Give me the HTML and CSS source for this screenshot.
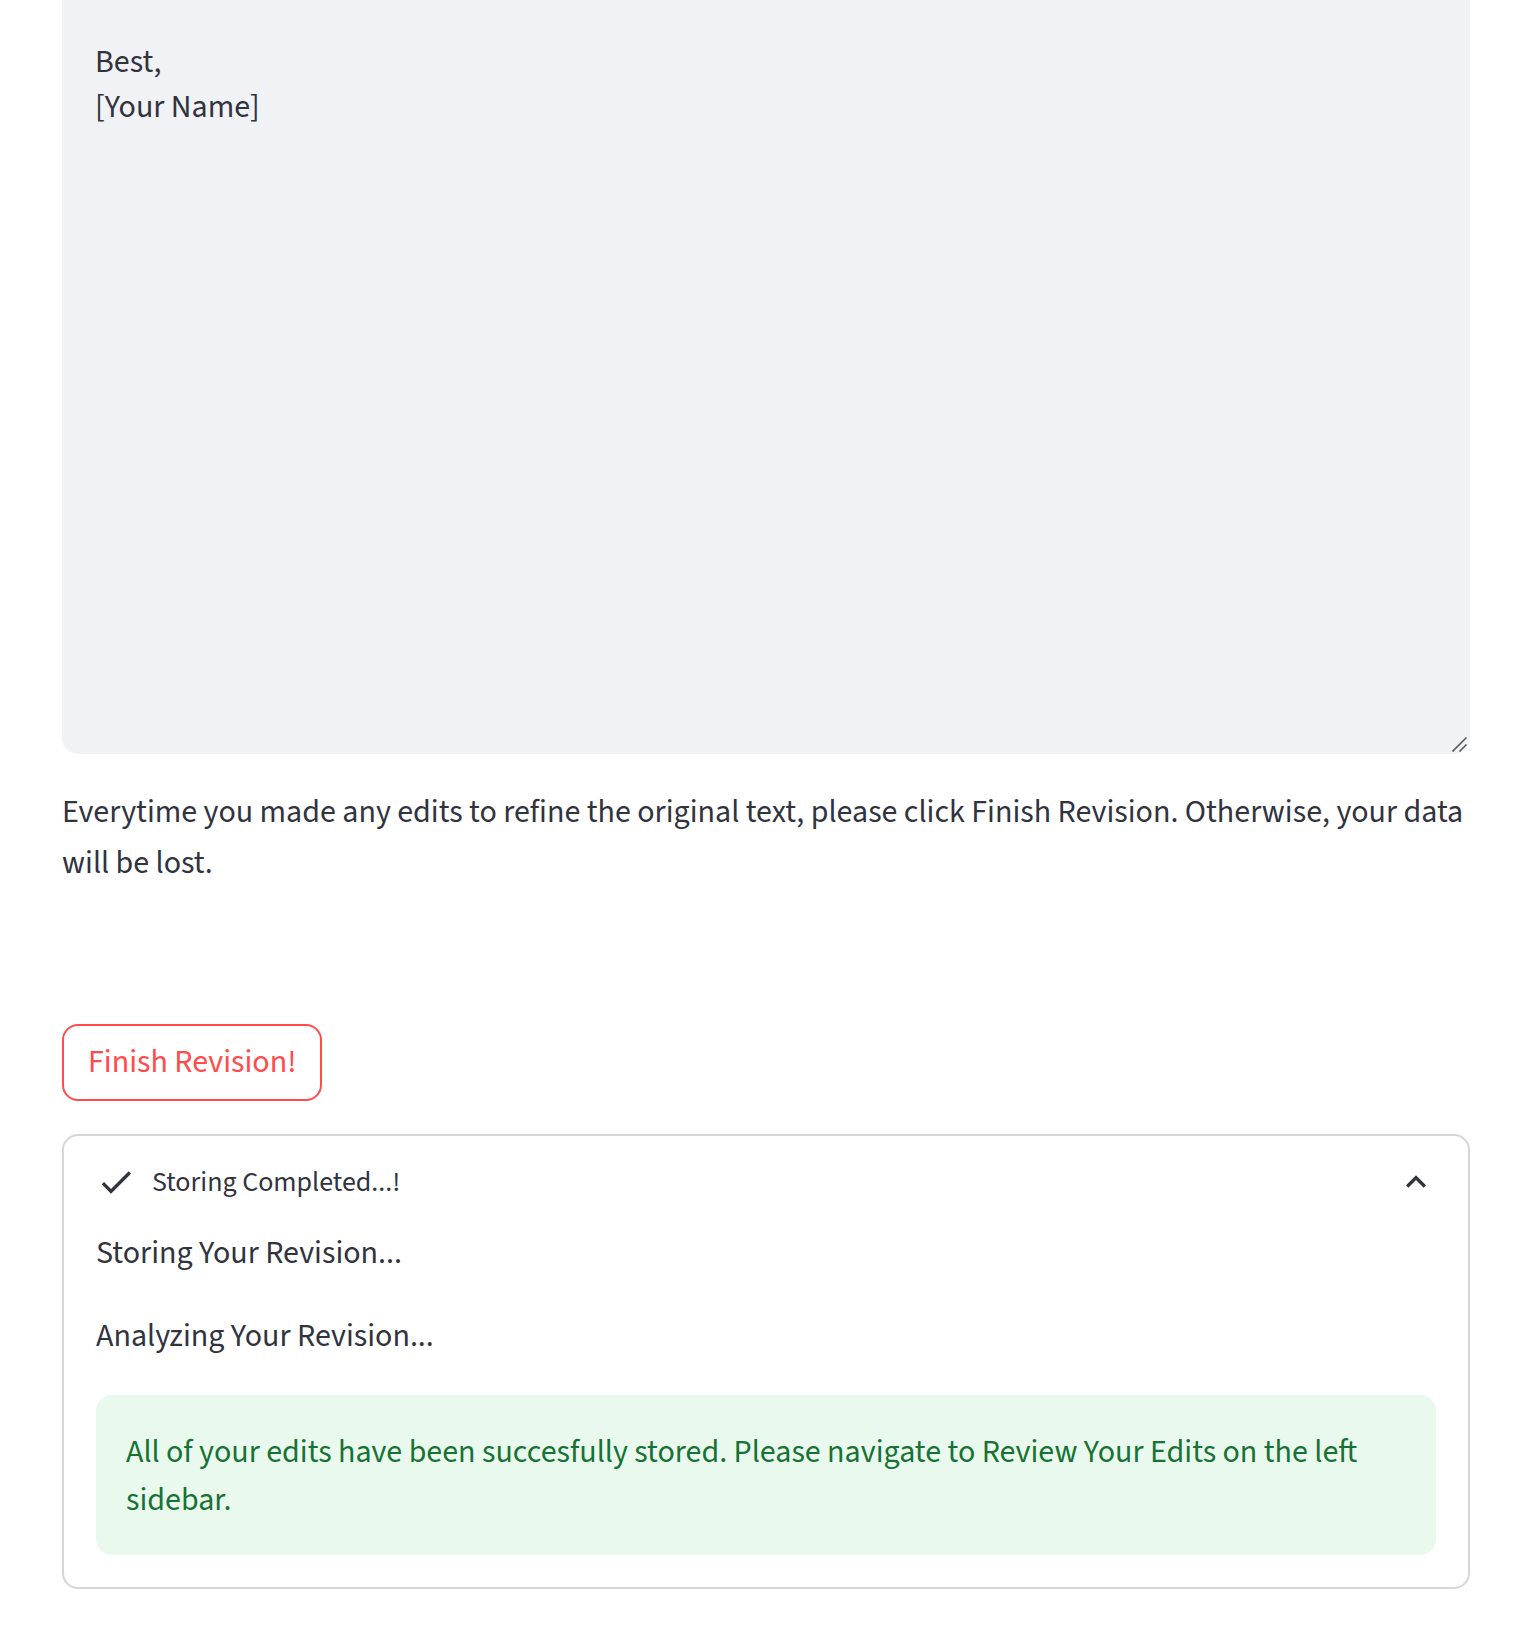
FILE: index.html
```html
<!DOCTYPE html>
<html lang="en">
<head>
<meta charset="utf-8">
<title>Revision</title>
<link rel="stylesheet" href="styles.css">
</head>
<body>
<div class="main">
  <div class="ta-wrap">
    <textarea class="ta" spellcheck="false">Best,
[Your Name]</textarea>
    <svg class="grip" viewBox="0 0 16 16" width="16" height="16"><path d="M0.5 15.5 14.5 1.5M7.5 15.5 14.5 8.5" stroke="#5c5c5c" stroke-width="1.6" fill="none"/></svg>
  </div>
  <p class="note">Everytime you made any edits to refine the original text, please click Finish Revision. Otherwise, your data will be lost.</p>
  <button class="btn" type="button">Finish Revision!</button>
  <details class="exp" open>
    <summary class="exp-sum">
      <svg class="ico-check" viewBox="0 0 24 24" width="40" height="40"><path d="M9 16.17 4.83 12l-1.42 1.41L9 19 21 7l-1.41-1.41z" fill="#31333F"/></svg>
      <span class="exp-title">Storing Completed...!</span>
      <svg class="ico-chev" viewBox="0 0 24 24" width="40" height="40"><path d="M12 8l-6 6 1.41 1.41L12 10.83l4.59 4.58L18 14z" fill="#31333F"/></svg>
    </summary>
    <div class="exp-body">
      <p class="exp-p">Storing Your Revision...</p>
      <p class="exp-p">Analyzing Your Revision...</p>
      <div class="alert">All of your edits have been succesfully stored. Please navigate to Review Your Edits on the left sidebar.</div>
    </div>
  </details>
</div>
</body>
</html>
```
FILE: styles.css
```css
* { box-sizing: border-box; }
html, body { margin: 0; padding: 0; background: #fff; }
body {
  font-family: "Source Sans 3", "Source Sans Pro", Lato, sans-serif;
  color: #31333F;
  font-size: 32px;
}
.main {
  width: 1408px;
  margin-left: 62px;
  display: flex;
  flex-direction: column;
  align-items: flex-start;
}
.ta-wrap {
  position: relative;
  width: 100%;
  height: 754px;
  background: #F0F2F6;
  border: 2px solid #F0F2F6;
  border-radius: 0 0 16px 16px;
  display: flex;
}
.ta {
  flex: 1;
  width: 100%;
  height: 100%;
  border: none;
  outline: none;
  background: transparent;
  resize: none;
  font-family: inherit;
  font-size: 32px;
  line-height: 44.8px;
  color: #31333F;
  padding: 38px 31px 16px 31px;
  margin: 0;
  overflow: hidden;
}
.grip {
  position: absolute;
  right: 0;
  bottom: 0;
  display: block;
}
.note {
  margin: 33px 0 0 0;
  line-height: 51.2px;
}
.btn {
  margin-top: 135px;
  min-height: 76.8px;
  padding: 8px 24px;
  border: 2px solid #FF4B4B;
  border-radius: 16px;
  background: #fff;
  color: #FF4B4B;
  font-family: inherit;
  font-size: 32px;
  line-height: 51.2px;
  display: flex;
  align-items: center;
  justify-content: center;
}
.exp {
  margin-top: 33px;
  width: 100%;
  border: 2px solid #D6D6D9;
  border-radius: 16px;
}
.exp-sum {
  list-style: none;
  height: 92px;
  padding: 0 32px;
  display: flex;
  align-items: center;
  gap: 16px;
  font-size: 28px;
  cursor: pointer;
}
.exp-sum::-webkit-details-marker { display: none; }
.exp-title { flex: 1; }
.ico-check, .ico-chev { flex: none; display: block; }
.exp-body {
  padding: 0 32px 32px 32px;
}
.exp-p {
  margin: 0 0 32px 0;
  line-height: 51.2px;
}
.alert {
  background: #E9F9EE;
  color: #177233;
  border-radius: 16px;
  padding: 33px 30px 31px 30px;
  line-height: 48px;
}
```
